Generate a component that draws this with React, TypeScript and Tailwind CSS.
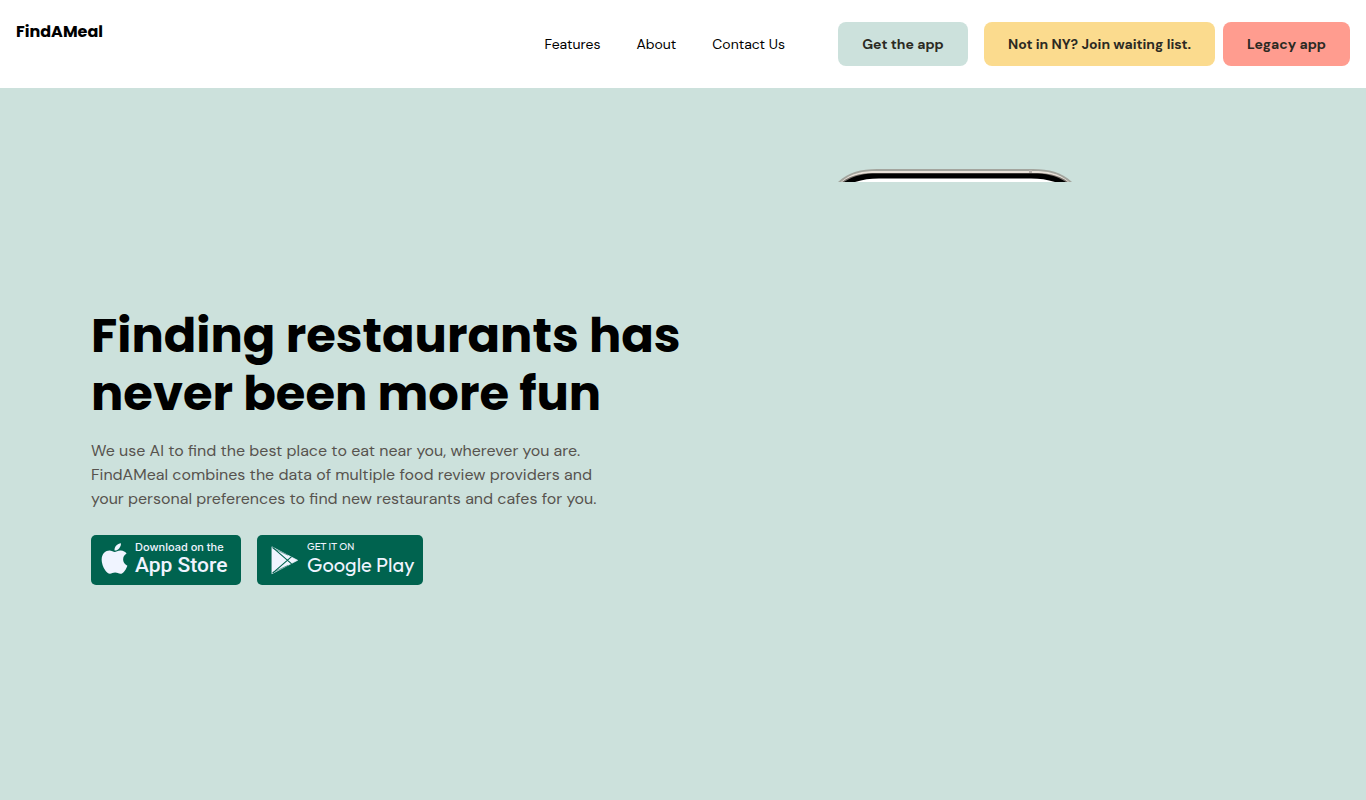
import React from "react";
import { FaApple } from "react-icons/fa";

const links = [
  { label: "Features", href: "#features" },
  { label: "About", href: "#about" },
  { label: "Contact Us", href: "#contact" },
];

function Header() {
  return (
    <header className="flex h-22 items-center justify-between bg-white px-4">
      <a
        href="#home"
        className="self-start pt-5 font-['Poppins','Inter',sans-serif] text-base leading-6 font-bold text-black"
      >
        FindAMeal
      </a>
      <div className="flex items-center">
        <nav className="mr-[53px] flex gap-9 text-sm leading-5 text-black">
          {links.map((link) => (
            <a key={link.href} href={link.href} className="whitespace-nowrap">
              {link.label}
            </a>
          ))}
        </nav>
        <button className="mr-4 h-11 min-w-[130px] rounded-lg bg-[#cce1dc] px-5 text-sm font-bold whitespace-nowrap text-[#2b2a23]">
          Get the app
        </button>
        <button className="mr-2 h-11 min-w-[231px] rounded-lg bg-[#fbdb8e] px-5 text-sm font-bold whitespace-nowrap text-[#2b2a23]">
          Not in NY? Join waiting list.
        </button>
        <button className="h-11 min-w-[127px] rounded-lg bg-[#ff9c8f] px-5 text-sm font-bold whitespace-nowrap text-[#2b2a23]">
          Legacy app
        </button>
      </div>
    </header>
  );
}

function PlayIcon() {
  return (
    <svg viewBox="0 0 27 29" className="h-[29px] w-[27px] shrink-0" aria-hidden="true">
      <path d="M0.9 0.8 L26.7 14.3 L0.9 27.8 Z" fill="#f0f4ff" stroke="#f0f4ff" strokeWidth="0.6" strokeLinejoin="round" />
      <path d="M1.6 1.4 L20.6 17.9 M1.6 27.2 L20.6 10.7" fill="none" stroke="#00634f" strokeWidth="1.1" />
      <path d="M1.6 2.2 L17 9.2 M1.6 26.4 L17 19.4" fill="none" stroke="#00634f" strokeWidth="0.5" />
    </svg>
  );
}

function StoreLinks() {
  return (
    <div className="mt-6 flex gap-4 text-[#f0f4ff]">
      <a href="#app-store" className="flex h-[50px] w-[150px] items-center rounded-[5px] bg-[#00634f] pl-[6px]">
        <FaApple className="mb-1 size-[35px] shrink-0" aria-hidden="true" />
        <span className="ml-[3px] flex flex-col pb-[2px] whitespace-nowrap">
          <span className="font-['Inter',sans-serif] text-[11px] leading-3 font-medium">Download on the</span>
          <span className="font-['Roboto','Inter',sans-serif] text-[21px] leading-6 font-medium">App Store</span>
        </span>
      </a>
      <a href="#google-play" className="flex h-[50px] w-[166px] items-center rounded-[5px] bg-[#00634f] pl-[14px]">
        <PlayIcon />
        <span className="ml-[9px] flex flex-col pb-[2px] font-['Outfit','Lato',sans-serif] whitespace-nowrap">
          <span className="text-[10px] leading-3">GET IT ON</span>
          <span className="text-[20px] leading-6">Google Play</span>
        </span>
      </a>
    </div>
  );
}

function Phone() {
  return (
    <svg viewBox="0 0 236 13" className="h-[13px] w-[236px]" role="img" aria-label="Phone">
      <path d="M1 13 C12 3 24 0 40 0 H196 C212 0 224 3 235 13 Z" fill="#a3a59e" />
      <path d="M4 13 C14 4 26 2 40 2 H196 C210 2 222 4 232 13 Z" fill="#e9e1d9" />
      <path d="M5 13 C15 5 27 4 40 4 H196 C209 4 221 5 231 13 Z" fill="#77716c" />
      <path d="M7 13 C17 6 28 4.5 40 4.5 H196 C208 4.5 219 6 229 13 Z" fill="#000" />
      <path d="M18 13 C26 10.5 33 9.4 42 9.4 H194 C203 9.4 210 10.5 218 13 Z" fill="#fff" />
      <rect x="192" y="1" width="3" height="3" fill="#b8b2ac" />
    </svg>
  );
}

function Hero() {
  return (
    <main className="flex flex-1 items-center bg-[#cce1dc] pl-[91px]">
      <section className="w-[600px] shrink-0 pt-1">
        <h1 className="font-['Poppins','Inter',sans-serif] text-5xl leading-[58px] font-bold whitespace-nowrap text-black">
          Finding restaurants has
          <br />
          never been more fun
        </h1>
        <p className="mt-4 text-base leading-6 whitespace-nowrap text-[#57534e]">
          We use AI to find the best place to eat near you, wherever you are.
          <br />
          FindAMeal combines the data of multiple food review providers and
          <br />
          your personal preferences to find new restaurants and cafes for you.
        </p>
        <StoreLinks />
      </section>
      <div className="ml-[146px] self-start pt-[81px]">
        <Phone />
      </div>
    </main>
  );
}

export default function App() {
  return (
    <div className="flex min-h-screen flex-col font-['DM_Sans','Inter',sans-serif]">
      <Header />
      <Hero />
    </div>
  );
}
